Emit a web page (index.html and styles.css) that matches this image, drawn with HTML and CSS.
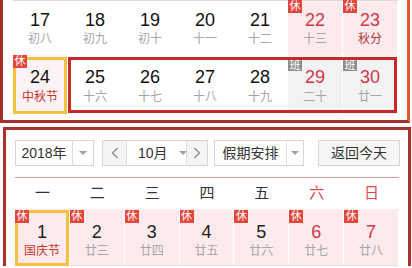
FILE: index.html
```html
<!DOCTYPE html>
<html>
<head>
<meta charset="utf-8">
<link rel="stylesheet" href="styles.css">
</head>
<body>
<div class="cal cal-top">
  <div class="grid r1">
    <div class="cell"><div class="num">17</div><div class="lunar">初八</div></div>
    <div class="cell"><div class="num">18</div><div class="lunar">初九</div></div>
    <div class="cell"><div class="num">19</div><div class="lunar">初十</div></div>
    <div class="cell"><div class="num">20</div><div class="lunar">十一</div></div>
    <div class="cell"><div class="num">21</div><div class="lunar">十二</div></div>
    <div class="cell hol"><span class="badge">休</span><div class="num red">22</div><div class="lunar">十三</div></div>
    <div class="cell hol"><span class="badge">休</span><div class="num red">23</div><div class="lunar term">秋分</div></div>
  </div>
  <div class="grid r2">
    <div class="cell today"><span class="badge">休</span><div class="num">24</div><div class="lunar fest">中秋节</div></div>
    <div class="cell"><div class="num">25</div><div class="lunar">十六</div></div>
    <div class="cell"><div class="num">26</div><div class="lunar">十七</div></div>
    <div class="cell"><div class="num">27</div><div class="lunar">十八</div></div>
    <div class="cell"><div class="num">28</div><div class="lunar">十九</div></div>
    <div class="cell work"><span class="badge ban">班</span><div class="num red">29</div><div class="lunar">二十</div></div>
    <div class="cell work"><span class="badge ban">班</span><div class="num red">30</div><div class="lunar">廿一</div></div>
    <div class="range"></div>
  </div>
</div>

<div class="cal cal-bottom">
  <div class="controls">
    <div class="ctl year"><span class="txt">2018年</span><span class="arr"><i class="tri"></i></span></div>
    <div class="ctl month">
      <span class="nav prev"><svg width="8" height="12" viewBox="0 0 8 12"><polyline points="6.5,1 1.5,6 6.5,11" fill="none" stroke="#888" stroke-width="1.2"/></svg></span>
      <span class="mid"><span class="mtxt">10月</span><i class="tri"></i></span>
      <span class="nav next"><svg width="8" height="12" viewBox="0 0 8 12"><polyline points="1.5,1 6.5,6 1.5,11" fill="none" stroke="#888" stroke-width="1.2"/></svg></span>
    </div>
    <div class="ctl holsel"><span class="txt">假期安排</span><span class="arr"><i class="tri"></i></span></div>
    <div class="ctl btn">返回今天</div>
  </div>
  <div class="sep"></div>
  <div class="grid week">
    <div>一</div><div>二</div><div>三</div><div>四</div><div>五</div><div class="wkend">六</div><div class="wkend">日</div>
  </div>
  <div class="grid r3">
    <div class="cell hol today2"><span class="badge">休</span><div class="num">1</div><div class="lunar fest">国庆节</div></div>
    <div class="cell hol"><span class="badge">休</span><div class="num">2</div><div class="lunar">廿三</div></div>
    <div class="cell hol"><span class="badge">休</span><div class="num">3</div><div class="lunar">廿四</div></div>
    <div class="cell hol"><span class="badge">休</span><div class="num">4</div><div class="lunar">廿五</div></div>
    <div class="cell hol"><span class="badge">休</span><div class="num">5</div><div class="lunar">廿六</div></div>
    <div class="cell hol"><span class="badge">休</span><div class="num red">6</div><div class="lunar">廿七</div></div>
    <div class="cell hol"><span class="badge">休</span><div class="num red">7</div><div class="lunar">廿八</div></div>
  </div>
</div>
</body>
</html>
```

FILE: styles.css
```css
html, body {
  margin: 0;
  padding: 0;
  background: #fff;
}
body {
  width: 412px;
  height: 268px;
  overflow: hidden;
  font-family: "Liberation Sans", "Noto Sans CJK SC", sans-serif;
  color: #111;
}

.cal {
  box-sizing: border-box;
  background: #fff;
}
.cal-top {
  width: 410px;
  border-left: 3px solid #a3302d;
  border-right: 3px solid #e05a2e;
  border-bottom: 3px solid #a3302d;
  padding: 0 9px 6px 10px;
}
.cal-bottom {
  width: 408px;
  margin: 4px 0 0 3px;
  border: 3px solid #a8302f;
  border-bottom: none;
  padding: 10px 9px 0 9px;
}

.grid {
  display: grid;
  grid-template-columns: repeat(7, 1fr);
}

.cell {
  position: relative;
  box-sizing: border-box;
  text-align: center;
  border-right: 1px solid #fff;
}
.num {
  font-size: 18px;
  line-height: 20px;
  color: #111;
}
.num.red { color: #d2364b; }
.lunar {
  font-size: 12px;
  line-height: 16px;
  color: #a6a6a6;
  margin-top: 1px;
}
.lunar.term { color: #b0393c; }
.lunar.fest { color: #c8352f; }

.hol { background: #fdeaec; }
.work { background: #f2f2f2; }

.badge {
  position: absolute;
  left: 0;
  top: 0;
  width: 14px;
  height: 13px;
  background: #e4463b;
  color: #fff;
  font-size: 11px;
  line-height: 13px;
  text-align: center;
  z-index: 3;
}
.badge.ban {
  background: #8e8e8e;
  top: 4px;
  height: 12px;
  line-height: 12px;
}

.r1 { border-top: 1px solid #dcdcdc; }
.r1 .cell { height: 54px; padding-top: 9px; }
.r1 .hol .badge { top: -1px; }

.r2 { position: relative; }
.r2 .cell { height: 59px; padding-top: 12px; }
.r2 .lunar { margin-top: 2px; }

.today { background: #fdf3f4; }
.today::after {
  content: "";
  position: absolute;
  left: 0;
  top: 2px;
  width: 54px;
  height: 57px;
  box-sizing: border-box;
  border: 3px solid #f2c240;
  z-index: 2;
}

.range {
  position: absolute;
  left: 55px;
  top: 2px;
  width: 329px;
  height: 56px;
  box-sizing: border-box;
  border: 3px solid #c7282c;
  z-index: 4;
}

/* controls */
.controls {
  display: flex;
  height: 26px;
}
.ctl {
  box-sizing: border-box;
  height: 26px;
  border: 1px solid #d6d6d6;
  background: #fff;
  display: flex;
  align-items: stretch;
  font-size: 14px;
  color: #333;
  line-height: 24px;
  white-space: nowrap;
  flex-shrink: 0;
}
.ctl .txt {
  text-align: center;
  border-right: 1px solid #dedede;
}
.ctl .arr {
  flex: 1;
  display: flex;
  align-items: center;
  justify-content: center;
}
.tri {
  display: inline-block;
  flex-shrink: 0;
  width: 0;
  height: 0;
  border-left: 4px solid transparent;
  border-right: 4px solid transparent;
  border-top: 4px solid #a3a3a3;
}
.year { width: 79px; }
.year .txt { width: 56px; }

.month { width: 106px; margin-left: 8px; }
.month .nav {
  display: flex;
  align-items: center;
  justify-content: center;
  background: #f4f4f4;
}
.month .prev { width: 23px; border-right: 1px solid #dedede; flex-shrink: 0; }
.month .mid {
  width: 60px;
  flex-shrink: 0;
  box-sizing: border-box;
  border-right: 1px solid #dedede;
  display: flex;
  align-items: center;
  gap: 11px;
  padding-left: 11px;
}
.month .mtxt { white-space: nowrap; }
.month .next { flex: 1; }

.holsel { width: 90px; margin-left: 6px; }
.holsel .txt { width: 71px; }

.btn {
  width: 82px;
  margin-left: 14px;
  justify-content: center;
  background: #f6f6f6;
}

.sep {
  height: 1px;
  background: #dca2a2;
  margin-top: 11px;
}

.week {
  height: 31px;
  line-height: 30px;
  font-size: 15px;
  color: #333;
  text-align: center;
}
.week .wkend { color: #e0474c; }

.r3 .cell {
  height: 57px;
  padding-top: 13px;
  border-bottom: 1px solid #e3e3e3;
}
.r3 .badge { top: 1px; }
.r3 .num { color: #222; }
.r3 .num.red { color: #d2364b; }
.today2::after {
  content: "";
  position: absolute;
  left: 0;
  top: 1px;
  width: 54px;
  height: 56px;
  box-sizing: border-box;
  border: 3px solid #f2c240;
  z-index: 2;
}
```
